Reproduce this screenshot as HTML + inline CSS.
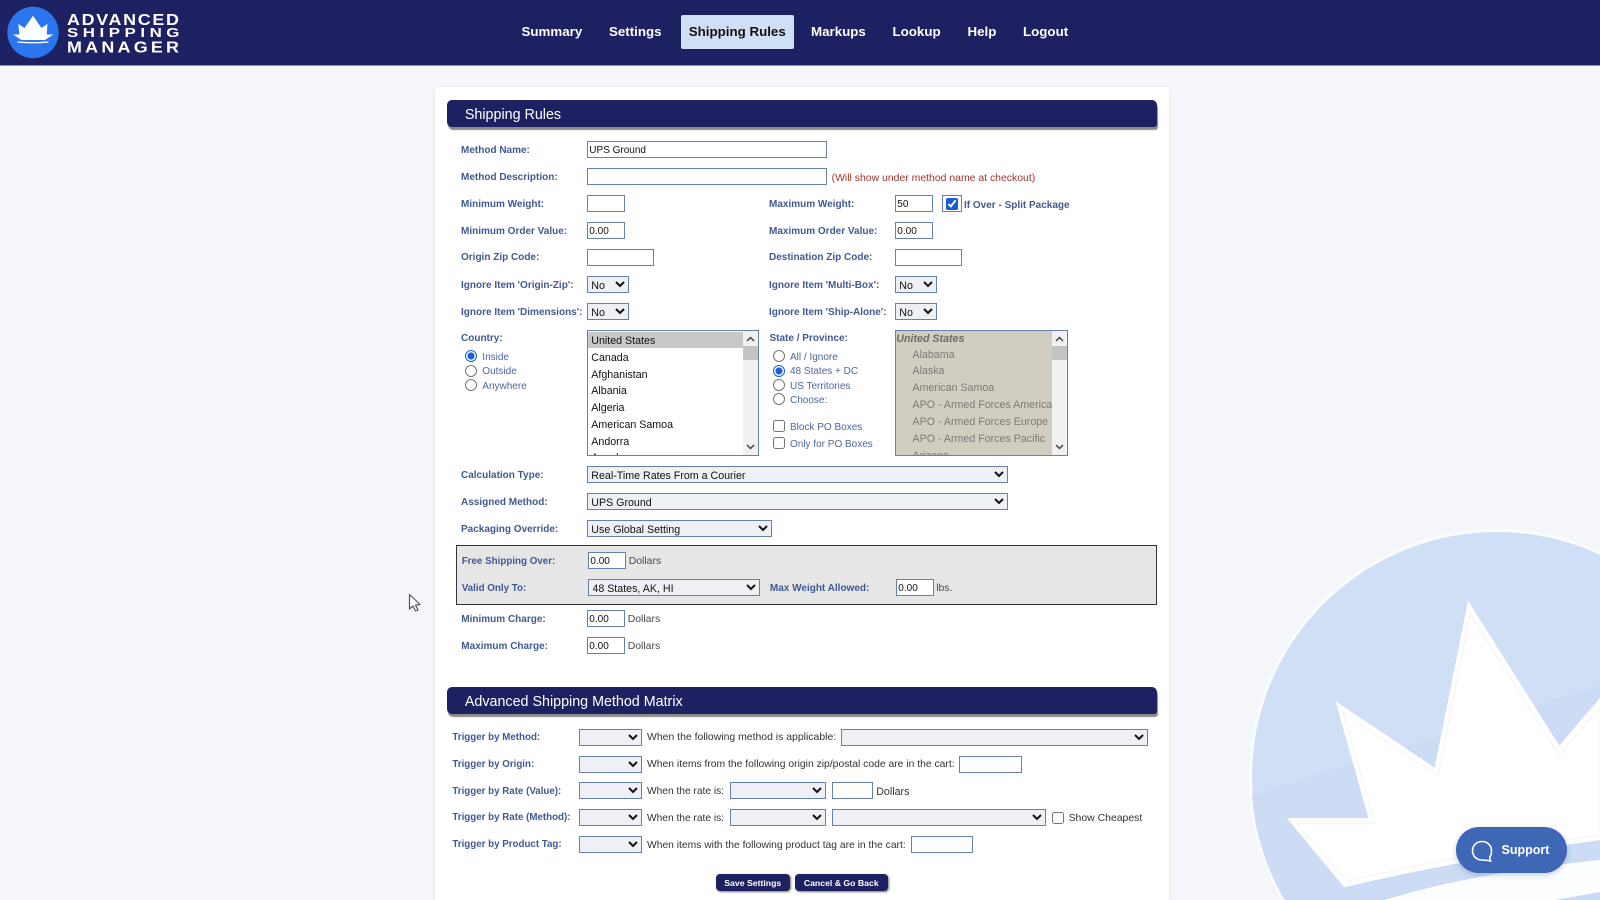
<!DOCTYPE html>
<html lang="en"><head><meta charset="utf-8"><title>Shipping Rules</title>
<style>
html,body{margin:0;padding:0;width:1600px;height:900px;overflow:hidden;background:#f4f6f9;font-family:"Liberation Sans",Arial,sans-serif}
#page{position:relative;width:1600px;height:900px;overflow:hidden;filter:blur(.3px)}
#wm{position:absolute;left:0;top:0}
header{position:absolute;left:0;top:0;width:1600px;height:65px;background:#1e2161;border-bottom:1px solid #8f93b8}
nav a{position:absolute;top:25px;font:bold 13.33px/14px "Liberation Sans",sans-serif;color:#fff;white-space:nowrap}
nav a.on{left:680.5px;top:15px;width:113.5px;height:33.5px;line-height:33px;text-align:center;background:#cfe0f6;color:#111;border-radius:2px}
#panel{position:absolute;left:435px;top:87px;width:733.5px;height:813px;background:#fff;box-shadow:0 0 5px rgba(0,0,0,.07);border-radius:2px}
.bar{position:absolute;left:447.4px;width:709.6px;height:27px;background:#1e2161;border-radius:5px 5px 3px 5px;box-shadow:1px 3px 1px #8a8a8a;color:#fff;font-size:14.3px;line-height:30px;text-indent:17.5px}
.l,.t,.r,.o{position:absolute;white-space:nowrap;font-size:10px;line-height:14px}
.l{font-weight:bold;color:#3f5b92;margin-top:1px}
.t{color:#4a4a4a;font-size:10.45px;margin-top:1.5px}
.t.w{color:#333;margin-top:.5px}
.r{color:#4c66a0;margin-top:1px}
.m{font-size:9.75px;margin-left:-.5px}
input[type=text]{position:absolute;box-sizing:border-box;height:17px;margin:0;padding:2px 0 0 1px;border:1px solid #6581ae;background:#fff;font:10px "Liberation Sans",sans-serif;color:#111;outline:0;border-radius:0}
select{position:absolute;box-sizing:border-box;height:17px;margin:0;padding:1.5px 0 0 0;text-indent:-1px;border:1px solid #6581ae;background:#eff0f5;font:10.67px "Liberation Sans",sans-serif;color:#111;border-radius:0}
input[type=radio],input[type=checkbox]{position:absolute;margin:0;width:12px;height:12px;accent-color:#1a5fd6}
.list{position:absolute;box-sizing:border-box;top:330px;height:126px;border:1px solid #6581ae;overflow:hidden;background:#fff}
.list .o{font-size:10.67px;color:#111}
.sb{position:absolute;right:0;top:0;bottom:0;width:15px;background:#f1f1f1}
.sb i{position:absolute;left:0;top:15px;width:15px;height:14px;background:#c4c4c4}
.sb svg{position:absolute;left:3px}
.grey{position:absolute;box-sizing:border-box;left:455.8px;top:545.3px;width:701px;height:59.5px;background:#e6e6e6;border:1px solid #333}
.btn{position:absolute;top:874px;height:17px;background:#1e2161;color:#fff;font:bold 8.7px/18px "Liberation Sans",sans-serif;text-align:center;border-radius:4px;box-shadow:1px 1px 2px rgba(0,0,0,.55)}
#sup{position:absolute;left:1456px;top:827px;width:110.5px;height:46px;border-radius:23px;background:#3e68b5;box-shadow:0 2px 6px rgba(40,60,110,.25);color:#fff;font:bold 12.5px/46px "Liberation Sans",sans-serif}
#sup span{position:absolute;left:45.5px;top:0}
#sup svg{position:absolute;left:14px;top:12px}
</style></head>
<body>
<div id="page">
<svg id="wm" width="1600" height="900" viewBox="0 0 1600 900">
<defs><clipPath id="c"><circle cx="1497" cy="776" r="246"/></clipPath></defs>
<circle cx="1497" cy="777" r="246.5" fill="#cfdff5" stroke="#fbfcfe" stroke-width="3"/>
<g clip-path="url(#c)">
<path d="M1200 812L1433 738L1600 685V900H1200Z" fill="#cbdcf4"/>
<path d="M1378 902Q1470 873 1600 860V900H1378Z" fill="#fdfeff"/>
<path d="M1555 900L1600 892V900Z" fill="#c8daf3"/>
</g>
<path d="M1291 820L1371 820L1339 706L1436 771L1469 606L1559 749L1600 701V838Q1460 858 1345 885Z" fill="#fff" stroke="#fff" stroke-width="4"/>
<path d="M1296 823L1375 823L1343 712L1438 776L1470 614L1559 755L1600 708V835Q1460 855 1347 881Z" fill="#fff" stroke="#f1f3f6" stroke-width="1"/>
</svg>

<header>
<svg width="190" height="65" viewBox="0 0 190 65" style="position:absolute;left:0;top:0">
<circle cx="33" cy="32.5" r="25.7" fill="#2b76ee"/>
<path d="M13 34.5H19.5L18.3 24L24.5 28L33 15.7L41.5 28L47.5 24L46.7 34.5H53.3L45 40H21.5Z" fill="#fff"/>
<path d="M17.5 42Q33 43.5 48.5 42" stroke="#fff" stroke-width="1.3" fill="none"/>
<g fill="#fff" font-family="Liberation Sans" font-weight="bold">
<text transform="translate(67 25) scale(1.12 1)" font-size="16" textLength="100" lengthAdjust="spacing">ADVANCED</text>
<text transform="translate(67 36.8) scale(1.3 1)" font-size="13" textLength="86.5" lengthAdjust="spacing">SHIPPING</text>
<text transform="translate(67 52.3) scale(1.12 1)" font-size="16" textLength="100" lengthAdjust="spacing">MANAGER</text>
</g>
</svg>
<nav>
<a style="left:521.5px">Summary</a>
<a style="left:609px">Settings</a>
<a class="on">Shipping Rules</a>
<a style="left:811px">Markups</a>
<a style="left:892.5px">Lookup</a>
<a style="left:967.5px">Help</a>
<a style="left:1023px">Logout</a>
</nav>
</header>

<div id="panel"></div>
<div class="bar" style="top:100px">Shipping Rules</div>

<div class="l" style="left:461px;top:142.5px">Method Name:</div>
<input type="text" value="UPS Ground" style="left:587.3px;top:141.3px;width:239.4px">
<div class="l" style="left:461px;top:169.5px">Method Description:</div>
<input type="text" style="left:587.3px;top:168.3px;width:239.4px">
<div class="t" style="left:831.6px;top:170.5px;color:#a2332b">(Will show under method name at checkout)</div>

<div class="l" style="left:461px;top:196.5px">Minimum Weight:</div>
<input type="text" style="left:587.3px;top:195.3px;width:37.4px">
<div class="l" style="left:769px;top:196.5px">Maximum Weight:</div>
<input type="text" value="50" style="left:895.3px;top:195.3px;width:37.4px">
<div style="position:absolute;box-sizing:border-box;left:942.3px;top:195px;width:19.4px;height:17px;border:1px solid #6581ae;background:#fff"></div>
<input type="checkbox" checked style="left:946px;top:197.5px">
<div class="l" style="left:964px;top:197.5px">If Over - Split Package</div>

<div class="l" style="left:461px;top:223.5px">Minimum Order Value:</div>
<input type="text" value="0.00" style="left:587.3px;top:222.3px;width:37.4px">
<div class="l" style="left:769px;top:223.5px">Maximum Order Value:</div>
<input type="text" value="0.00" style="left:895.3px;top:222.3px;width:37.4px">

<div class="l" style="left:461px;top:250px">Origin Zip Code:</div>
<input type="text" style="left:587.3px;top:249.3px;width:67px">
<div class="l" style="left:769px;top:250px">Destination Zip Code:</div>
<input type="text" style="left:895.3px;top:249.3px;width:67px">

<div class="l" style="left:461px;top:277.5px">Ignore Item 'Origin-Zip':</div>
<select style="left:587.3px;top:276px;width:41.7px"><option>No</option></select>
<div class="l" style="left:769px;top:277.5px">Ignore Item 'Multi-Box':</div>
<select style="left:895.3px;top:276px;width:41.7px"><option>No</option></select>
<div class="l" style="left:461px;top:304.5px">Ignore Item 'Dimensions':</div>
<select style="left:587.3px;top:303px;width:41.7px"><option>No</option></select>
<div class="l" style="left:769px;top:304.5px">Ignore Item 'Ship-Alone':</div>
<select style="left:895.3px;top:303px;width:41.7px"><option>No</option></select>

<div class="l" style="left:461px;top:331px">Country:</div>
<input type="radio" name="a" checked style="left:465px;top:350.3px"><div class="r" style="left:482.3px;top:349.5px">Inside</div>
<input type="radio" name="a" style="left:465px;top:364.7px"><div class="r" style="left:482.3px;top:363.5px">Outside</div>
<input type="radio" name="a" style="left:465px;top:379px"><div class="r" style="left:482.3px;top:379px">Anywhere</div>

<div class="list" style="left:587.3px;width:172px">
<div style="position:absolute;left:0;top:1px;width:156px;height:16px;background:#c8c8c8"></div>
<div class="o" style="left:3px;top:2.7px">United States</div>
<div class="o" style="left:3px;top:19.7px">Canada</div>
<div class="o" style="left:3px;top:36.5px">Afghanistan</div>
<div class="o" style="left:3px;top:53px">Albania</div>
<div class="o" style="left:3px;top:70px">Algeria</div>
<div class="o" style="left:3px;top:86.8px">American Samoa</div>
<div class="o" style="left:3px;top:103.5px">Andorra</div>
<div class="o" style="left:3px;top:120.3px">Angola</div>
<div class="sb"><svg width="9" height="6" style="top:5px"><path d="M1 5L4.5 1.5L8 5" stroke="#444" stroke-width="1.5" fill="none"/></svg><i></i><svg width="9" height="6" style="bottom:5px"><path d="M1 1L4.5 4.5L8 1" stroke="#444" stroke-width="1.5" fill="none"/></svg></div>
</div>

<div class="l" style="left:769.5px;top:331px">State / Province:</div>
<input type="radio" name="b" style="left:773px;top:350.2px"><div class="r" style="left:790px;top:349.7px">All / Ignore</div>
<input type="radio" name="b" checked style="left:773px;top:364.5px"><div class="r" style="left:790px;top:364px">48 States + DC</div>
<input type="radio" name="b" style="left:773px;top:378.7px"><div class="r" style="left:790px;top:379px">US Territories</div>
<input type="radio" name="b" style="left:773px;top:393px"><div class="r" style="left:790px;top:392.5px">Choose:</div>
<input type="checkbox" style="left:773px;top:420.3px"><div class="r" style="left:790px;top:419.8px">Block PO Boxes</div>
<input type="checkbox" style="left:773px;top:437px"><div class="r" style="left:790px;top:436.6px">Only for PO Boxes</div>

<div class="list" style="left:895.3px;width:172.4px;background:#d1cdc1">
<div class="o" style="left:0;top:.7px;font-weight:bold;font-style:italic;color:#6f6c66">United States</div>
<div class="o" style="left:16.2px;top:16.6px;color:#7d7b76">Alabama</div>
<div class="o" style="left:16.2px;top:33px;color:#7d7b76">Alaska</div>
<div class="o" style="left:16.2px;top:50px;color:#7d7b76">American Samoa</div>
<div class="o" style="left:16.2px;top:67.3px;color:#7d7b76">APO - Armed Forces America</div>
<div class="o" style="left:16.2px;top:84px;color:#7d7b76">APO - Armed Forces Europe</div>
<div class="o" style="left:16.2px;top:101px;color:#7d7b76">APO - Armed Forces Pacific</div>
<div class="o" style="left:16.2px;top:117.5px;color:#7d7b76">Arizona</div>
<div class="sb"><svg width="9" height="6" style="top:5px"><path d="M1 5L4.5 1.5L8 5" stroke="#444" stroke-width="1.5" fill="none"/></svg><i></i><svg width="9" height="6" style="bottom:5px"><path d="M1 1L4.5 4.5L8 1" stroke="#444" stroke-width="1.5" fill="none"/></svg></div>
</div>

<div class="l" style="left:461px;top:467.5px">Calculation Type:</div>
<select style="left:587.3px;top:466.3px;width:420.3px"><option>Real-Time Rates From a Courier</option></select>
<div class="l" style="left:461px;top:494.5px">Assigned Method:</div>
<select style="left:587.3px;top:493.3px;width:420.3px"><option>UPS Ground</option></select>
<div class="l" style="left:461px;top:521.7px">Packaging Override:</div>
<select style="left:587.3px;top:520.3px;width:184.7px"><option>Use Global Setting</option></select>

<div class="grey"></div>
<div class="l" style="left:461.7px;top:554px;font-size:9.8px">Free Shipping Over:</div>
<input type="text" value="0.00" style="left:588.4px;top:552px;width:37.2px">
<div class="t" style="left:628.7px;top:553.7px">Dollars</div>
<div class="l" style="left:461.7px;top:580.5px;font-size:9.8px">Valid Only To:</div>
<select style="left:588.4px;top:579px;width:171.8px"><option>48 States, AK, HI</option></select>
<div class="l" style="left:769.9px;top:580.5px">Max Weight Allowed:</div>
<input type="text" value="0.00" style="left:896.3px;top:579px;width:37.3px">
<div class="t" style="left:936.2px;top:580.7px">lbs.</div>

<div class="l" style="left:461.3px;top:612.3px">Minimum Charge:</div>
<input type="text" value="0.00" style="left:587.3px;top:610px;width:37.4px">
<div class="t" style="left:627.7px;top:611.7px">Dollars</div>
<div class="l" style="left:461.3px;top:639px">Maximum Charge:</div>
<input type="text" value="0.00" style="left:587.3px;top:637px;width:37.4px">
<div class="t" style="left:627.7px;top:638.7px">Dollars</div>

<div class="bar" style="top:687.3px">Advanced Shipping Method Matrix</div>

<div class="l m" style="left:452.9px;top:730px">Trigger by Method:</div>
<select style="left:579px;top:728.7px;width:62.5px"><option></option></select>
<div class="t w" style="left:647px;top:730.5px">When the following method is applicable:</div>
<select style="left:841.3px;top:728.7px;width:306.7px"><option></option></select>

<div class="l m" style="left:452.9px;top:756.7px">Trigger by Origin:</div>
<select style="left:579px;top:755.5px;width:62.5px"><option></option></select>
<div class="t w" style="left:647px;top:757.5px;font-size:10.35px">When items from the following origin zip/postal code are in the cart:</div>
<input type="text" style="left:959.3px;top:755.5px;width:62.4px">

<div class="l m" style="left:452.9px;top:783.7px">Trigger by Rate (Value):</div>
<select style="left:579px;top:782.3px;width:62.5px"><option></option></select>
<div class="t w" style="left:647px;top:784.8px;font-size:10.2px">When the rate is:</div>
<select style="left:729.7px;top:782.3px;width:96px"><option></option></select>
<input type="text" style="left:831.6px;top:782.3px;width:41.4px">
<div class="t w" style="left:876.2px;top:784.8px;font-size:10.7px">Dollars</div>

<div class="l m" style="left:452.9px;top:810.3px">Trigger by Rate (Method):</div>
<select style="left:579px;top:809px;width:62.5px"><option></option></select>
<div class="t w" style="left:647px;top:811px;font-size:10.2px">When the rate is:</div>
<select style="left:729.7px;top:809px;width:96px"><option></option></select>
<select style="left:831.6px;top:809px;width:214px"><option></option></select>
<input type="checkbox" style="left:1052px;top:811.5px">
<div class="t w" style="left:1068.6px;top:811.5px">Show Cheapest</div>

<div class="l m" style="left:452.9px;top:837.3px">Trigger by Product Tag:</div>
<select style="left:579px;top:836px;width:62.5px"><option></option></select>
<div class="t w" style="left:647px;top:838px;font-size:10.3px">When items with the following product tag are in the cart:</div>
<input type="text" style="left:910.6px;top:836px;width:62.9px">

<div class="btn" style="left:715.5px;width:74.5px">Save Settings</div>
<div class="btn" style="left:795px;width:92.5px">Cancel &amp; Go Back</div>

<svg width="14" height="20" viewBox="0 0 14 20" style="position:absolute;left:408px;top:593px"><path d="M1.5 1.5V16L5 13L7.5 18L10 17L7.5 12L12 11.5Z" fill="#fff" stroke="#555" stroke-width="1.2" stroke-linejoin="round"/></svg>

<div id="sup"><svg width="24" height="24" viewBox="0 0 24 24"><path d="M12 2.5C6.5 2.5 2.5 6.5 2.5 11.7S6.5 21 12 21C14.5 21 16.5 21.2 20.5 22C19.6 20.6 19.6 19.5 19.8 18C21 16.4 21.5 14 21.5 11.7C21.5 6.5 17.5 2.5 12 2.5Z" fill="none" stroke="#fff" stroke-width="1.6"/></svg><span>Support</span></div>
</div>
</body></html>
